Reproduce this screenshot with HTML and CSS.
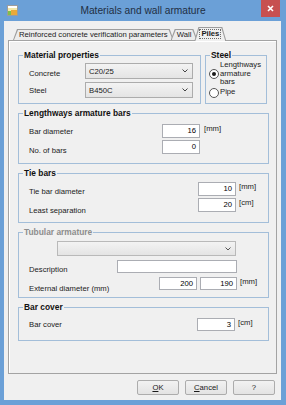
FILE: index.html
```html
<!DOCTYPE html>
<html lang="en">
<head>
  <meta charset="UTF-8">
  <title>Materials and wall armature</title>
  <link rel="stylesheet" href="styles.css">
</head>
<body>
<div class="win">
	<div class="titlebar">
		<svg class="appicon" width="11" height="11" viewBox="0 0 11 11">
			<rect x="0.5" y="0.5" width="10" height="10" fill="#f3e7a6" stroke="#9c9c9c"/>
			<rect x="1" y="1" width="9" height="2" fill="#ffffff"/>
			<rect x="4" y="5" width="6" height="5" fill="#e9a93a"/>
			<rect x="1" y="6" width="3" height="4" fill="#7fbf4a"/>
		</svg>
		<span class="title">Materials and wall armature</span>
		<span class="close">
			<svg width="7" height="7" viewBox="0 0 7 7"><path d="M1 1 L6 6 M6 1 L1 6" stroke="#fff" stroke-width="1.6"/></svg>
		</span>
	</div>
	<div class="client">
		<div class="tabs">
			<span class="tab first">Reinforced concrete verification parameters</span>
			<span class="tab">Wall</span>
			<span class="tab active"><span class="focus">Piles</span></span>
		</div>
		<div class="panel">
			<div class="toprow">
				<fieldset class="grp g-mat">
					<legend>Material properties</legend>
					<div class="mat">
						<span class="lbl d2">Concrete</span>
						<div class="combo">C20/25<svg width="6" height="4" viewBox="0 0 6 4"><path d="M0.5 0.5 L3 3 L5.5 0.5" fill="none" stroke="#444"/></svg></div>
						<span class="lbl">Steel</span>
						<div class="combo">B450C<svg width="6" height="4" viewBox="0 0 6 4"><path d="M0.5 0.5 L3 3 L5.5 0.5" fill="none" stroke="#444"/></svg></div>
					</div>
				</fieldset>
				<fieldset class="grp g-steel">
					<legend>Steel</legend>
					<div class="radios">
						<div class="radio-row"><span class="radio on"></span><span>Lengthways<br>armature<br>bars</span></div>
						<div class="radio-row pipe"><span class="radio"></span><span>Pipe</span></div>
					</div>
				</fieldset>
			</div>

			<fieldset class="grp g-len">
				<legend>Lengthways armature bars</legend>
				<div class="gbody">
					<div class="row"><span class="lbl">Bar diameter</span><span class="inp">16</span><span class="unit">[mm]</span></div>
					<div class="row"><span class="lbl d3">No. of bars</span><span class="inp">0</span></div>
				</div>
			</fieldset>

			<fieldset class="grp g-tie">
				<legend>Tie bars</legend>
				<div class="gbody">
					<div class="row"><span class="lbl d2">Tie bar diameter</span><span class="inp">10</span><span class="unit">[mm]</span></div>
					<div class="row"><span class="lbl d5">Least separation</span><span class="inp">20</span><span class="unit">[cm]</span></div>
				</div>
			</fieldset>

			<fieldset class="grp g-tub off">
				<legend>Tubular armature</legend>
				<div class="gbody">
					<div class="combo wide"><svg width="6" height="4" viewBox="0 0 6 4"><path d="M0.5 0.5 L3 3 L5.5 0.5" fill="none" stroke="#555"/></svg></div>
					<div class="row sm desc"><span class="lbl d3">Description</span><span class="inp long"></span></div>
					<div class="row sm"><span class="lbl d5 ext">External diameter (mm)</span><span class="inp">200</span><span class="inp second">190</span><span class="unit">[mm]</span></div>
				</div>
			</fieldset>

			<fieldset class="grp g-cov">
				<legend>Bar cover</legend>
				<div class="gbody">
					<div class="row sm"><span class="lbl">Bar cover</span><span class="inp">3</span><span class="unit">[cm]</span></div>
				</div>
			</fieldset>
		</div>
		<div class="buttons">
			<button type="button"><u>O</u>K</button>
			<button type="button"><u>C</u>ancel</button>
			<button type="button">?</button>
		</div>
	</div>
</div>
</body>
</html>
```

FILE: styles.css
```css
* { box-sizing: border-box; }
body {
	margin: 0;
	font-family: "Liberation Sans", Arial, sans-serif;
	font-size: 7.7px;
	color: #1a1a1a;
}
.win {
	width: 286px;
	height: 405px;
	background: #6ba0d7;
	display: flex;
	flex-direction: column;
}

/* title bar */
.titlebar {
	height: 21px;
	flex: none;
	display: grid;
	grid-template-columns: 1fr auto 1fr;
	align-items: center;
}
.appicon { margin-left: 7px; }
.title {
	font-size: 10.2px;
	color: #1f2f44;
}
.close {
	justify-self: end;
	align-self: start;
	margin-right: 6px;
	width: 19px;
	height: 17px;
	background: #c75050;
	display: flex;
	align-items: center;
	justify-content: center;
}

.client {
	flex: 1;
	margin: 0 5px 5px 4px;
	background: #f0f0f0;
	padding: 6px 4px 0;
	display: flex;
	flex-direction: column;
}

/* tabs */
.tabs {
	position: relative;
	z-index: 1;
	height: 13px;
	display: flex;
	align-items: flex-start;
	padding-left: 5px;
}
.tab {
	position: relative;
	height: 11px;
	margin-top: 2px;
	padding: 0 6px;
	line-height: 11px;
	margin-left: -3px;
	color: #1a1a1a;
}
.tab.first { margin-left: 0; }
.tab::before,
.tab::after {
	content: "";
	position: absolute;
	inset: 0;
	z-index: -1;
	clip-path: polygon(4px 0, calc(100% - 4px) 0, 100% 100%, 0 100%);
}
.tab::before { background: #9d9d9d; }
.tab::after {
	inset: 1px 1px 0;
	background: #ececec;
}
.tab.active {
	z-index: 1;
	height: 14px;
	margin-top: 0;
	line-height: 14px;
	font-weight: bold;
	padding: 0 5px;
}
.tab.active::after { background: #f0f0f0; }
.focus {
	border: 1px dotted #6d6d6d;
	padding: 0 1px;
	line-height: 8px;
	display: inline-block;
}

.panel {
	height: 334px;
	border: 1px solid #a3a3a3;
	box-shadow: inset 1px 1px #ffffff;
	padding: 9px 0 0 9px;
	display: flex;
	flex-direction: column;
	gap: 4px;
}
.toprow {
	display: flex;
	gap: 4px;
}

/* group boxes */
.grp {
	margin: 0;
	padding: 0;
	min-width: 0;
	border: 1px solid #a3bed9;
	width: 251px;
}
.grp legend {
	margin-left: 4px;
	padding: 0 1px;
	font-weight: bold;
	font-size: 8.4px;
	line-height: 11px;
	color: #111;
}
.grp.off legend { color: #8d8d8d; }
.g-mat { width: 183px; height: 54px; }
.g-steel { width: 62px; height: 54px; }
.g-len { height: 56px; }
.g-tie { height: 55px; }
.g-tub { height: 71px; }
.g-cov { height: 39px; }

.mat {
	display: grid;
	grid-template-columns: 56px 108px;
	row-gap: 3px;
	align-items: center;
	padding: 2px 0 0 10px;
}
.lbl { flex: none; line-height: 9px; }
.lbl.d2 { margin-top: 4px; }
.lbl.d3 { margin-top: 6px; }
.lbl.d5 { margin-top: 10px; }

.combo {
	height: 16px;
	border: 1px solid #acacac;
	background: linear-gradient(#f3f3f3, #e4e4e4);
	display: flex;
	align-items: center;
	justify-content: space-between;
	padding: 0 4px 0 3px;
	color: #1a1a1a;
}
.combo.wide {
	width: 179px;
	height: 15px;
	margin-left: 28px;
	justify-content: flex-end;
	border-color: #b9b9b9;
}

.radios { padding-left: 3px; }
.radio-row {
	display: flex;
	align-items: center;
	gap: 1px;
	line-height: 8.5px;
}
.radio-row.pipe { margin-top: 1px; }
.radio {
	flex: none;
	width: 10px;
	height: 10px;
	border: 1px solid #555;
	border-radius: 50%;
	background: #fff;
	display: flex;
	align-items: center;
	justify-content: center;
}
.radio.on::after {
	content: "";
	width: 4px;
	height: 4px;
	border-radius: 50%;
	background: #1a1a1a;
}

.gbody { padding: 5px 0 0 10px; }
.g-tie .gbody,
.g-tub .gbody { padding-top: 3px; }
.row {
	display: flex;
	align-items: center;
	height: 14px;
}
.row + .row { margin-top: 2px; }
.row.sm { height: 13px; }
.row.desc { margin-top: 4px; }
.row.sm + .row.sm { margin-top: 4px; }
.g-len .lbl { width: 133px; }
.g-tie .lbl { width: 169px; }
.g-cov .lbl { width: 168px; }
.g-tub .lbl { width: 88px; }
.g-tub .lbl.ext { width: 130px; }

.inp {
	flex: none;
	width: 38px;
	height: 100%;
	border: 1px solid #abadb3;
	background: #fff;
	text-align: right;
	padding-right: 3px;
	line-height: 12px;
	color: #000;
}
.row.sm .inp { line-height: 11px; }
.inp.long { width: 120px; }
.inp.second { width: 37px; margin-left: 3px; }
.unit { margin-left: 3px; align-self: flex-start; line-height: 10px; }
.g-len .unit { margin-left: 4px; }

/* buttons */
.buttons {
	display: flex;
	justify-content: flex-end;
	gap: 6px;
	margin-top: 6px;
	padding-right: 2px;
}
.buttons button {
	width: 42px;
	height: 15px;
	padding: 0;
	border: 1px solid #acacac;
	border-radius: 2px;
	background: linear-gradient(#f2f2f2, #e3e3e3);
	font-family: inherit;
	font-size: 7.7px;
	color: #1a1a1a;
}
```
